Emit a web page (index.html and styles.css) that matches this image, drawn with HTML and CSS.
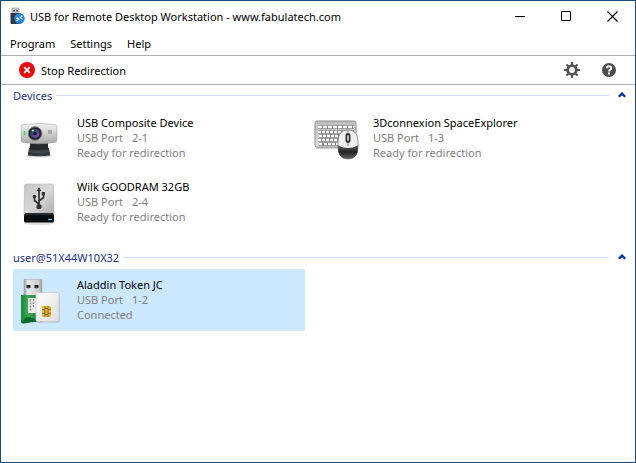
FILE: index.html
```html
<!DOCTYPE html>
<html lang="en">

<head>
	<meta charset="utf-8">
	<meta name="viewport" content="width=device-width, initial-scale=1">
	<title>USB for Remote Desktop Workstation</title>
	<link rel="stylesheet" href="styles.css">
</head>

<body>
	<div class="window">
		<header class="titlebar">
			<svg class="app-icon" width="16" height="18" viewBox="0 0 16 18">
				<rect x="3" y="1" width="7" height="6" fill="#c9cdd0" stroke="#85898c" stroke-width=".6"/>
				<path d="M4.3 3h1.5v1.5H4.3zM7.3 3h1.500v1.500H7.300z" fill="#222"/>
				<path d="M1.5 6h10v11h-9q-1 0-1-1z" fill="#34383c"/>
				<circle cx="10.5" cy="11.5" r="5.2" fill="#2188dc"/>
				<path d="M7.600 10.500l2 1.700-2 1.800M13.400 8.800l-2 1.800 2 1.700" fill="none" stroke="#fff" stroke-width="1.2"/>
			</svg>
			<h1 class="title">USB for Remote Desktop Workstation - www.fabulatech.com</h1>
			<button type="button" class="win-btn" aria-label="Minimize">
				<svg width="11" height="11" viewBox="0 0 11 11"><path d="M0 5.5h10" stroke="#000"/></svg>
			</button>
			<button type="button" class="win-btn" aria-label="Maximize">
				<svg width="11" height="11" viewBox="0 0 11 11"><path d="M.5.5h9v9h-9z" fill="none" stroke="#000"/></svg>
			</button>
			<button type="button" class="win-btn" aria-label="Close">
				<svg width="11" height="11" viewBox="0 0 11 11"><path d="M.5.5l10 10M10.5.5l-10 10" stroke="#000" stroke-width="1.1"/></svg>
			</button>
		</header>

		<nav class="menubar">
			<button type="button" class="menu">Program</button>
			<button type="button" class="menu">Settings</button>
			<button type="button" class="menu">Help</button>
		</nav>

		<div class="toolbar">
			<button type="button" class="tool stop">
				<svg width="16" height="16" viewBox="0 0 16 16">
					<circle cx="8" cy="8" r="8" fill="#e90a0e"/>
					<path d="M5.2 5.2l5.6 5.6M10.8 5.2l-5.6 5.6" stroke="#fff" stroke-width="1.9"/>
				</svg>
				Stop Redirection
			</button>
			<button type="button" class="tool" aria-label="Options">
				<svg width="16" height="16" viewBox="0 0 16 16">
					<path d="M8 0v16M0 8h16M2.500 2.500l11 11M13.500 2.500l-11 11" stroke="#555" stroke-width="2.2"/>
					<circle cx="8" cy="8" r="4.300" fill="#fff" stroke="#555" stroke-width="2.800"/>
				</svg>
			</button>
			<button type="button" class="tool" aria-label="Help">
				<svg width="14" height="14" viewBox="0 0 14 14">
					<circle cx="7" cy="7" r="7" fill="#4d4d4d"/>
					<path d="M4.700 5.300Q4.800 3.200 7 3.200t2.300 1.900Q9.300 6.200 8 6.800 7 7.300 7 8.600" fill="none" stroke="#fff" stroke-width="1.900"/>
					<path d="M6 9.600h2v1.800H6z" fill="#fff"/>
				</svg>
			</button>
		</div>

		<main class="content">
			<section class="group">
				<div class="group-head">
					<h2>Devices</h2>
					<button type="button" class="collapse" aria-label="Collapse Devices">
						<svg width="8" height="6" viewBox="0 0 8 6"><path d="M.8 4.8L4 1.6l3.2 3.2" fill="none" stroke="#003399" stroke-width="2.3"/></svg>
					</button>
				</div>
				<ul class="devices">
					<li class="device">
						<svg class="icon" width="48" height="48" viewBox="0 0 48 48">
							<defs>
								<linearGradient id="silver" x2="0" y2="1">
									<stop offset="0" stop-color="#f2f2f2"/>
									<stop offset="1" stop-color="#a9a9a9"/>
								</linearGradient>
								<linearGradient id="base" x2="0" y2="1">
									<stop offset="0" stop-color="#222"/>
									<stop offset="1" stop-color="#66696b"/>
								</linearGradient>
							</defs>
							<ellipse cx="22" cy="41" rx="13" ry="1.6" fill="#d5d5d5"/>
							<path d="M13 26h18v9H13z" fill="#282a2b"/>
							<path d="M12 33h20l1 6q-11 2-22 0z" fill="url(#base)"/>
							<path d="M11 37q11 1.600 22 0v3.400q-11 1.600-22 0z" fill="#35383a"/>
							<path d="M6 9.500q16-2 32 0 2 .3 2 2.500v13q0 2-2 2.500-16 2.500-32 0-2-.5-2-2.500V12q0-2.200 2-2.500z" fill="url(#silver)" stroke="#999" stroke-width=".5"/>
							<path d="M7.500 16v4" stroke="#35da48" stroke-width="1.600"/>
							<path d="M31 16h4M31 18h4" stroke="#777"/>
							<circle cx="18" cy="18.500" r="6.800" fill="#232428" stroke="#74767a"/>
							<circle cx="18" cy="18.500" r="4.600" fill="#315068"/>
							<circle cx="19" cy="19.500" r="3" fill="#7d43b4"/>
							<circle cx="18" cy="18.500" r="1.800" fill="#11131e"/>
							<circle cx="15.800" cy="15.500" r="1" fill="#b8d8dc"/>
						</svg>
						<div class="info">
							<h3>USB Composite Device</h3>
							<p><span>USB Port</span><span>2-1</span></p>
							<p>Ready for redirection</p>
						</div>
					</li>
					<li class="device">
						<svg class="icon" width="48" height="48" viewBox="0 0 48 48">
							<defs>
								<linearGradient id="keys" x2="0" y2="1">
									<stop offset="0" stop-color="#bcbcbc"/>
									<stop offset="1" stop-color="#e2e2e2"/>
								</linearGradient>
								<linearGradient id="mouse" x2="0" y2="1">
									<stop offset="0" stop-color="#686868"/>
									<stop offset=".5" stop-color="#222"/>
									<stop offset="1" stop-color="#626262"/>
								</linearGradient>
							</defs>
							<path d="M3 33h42" stroke="#ccc" stroke-width="2"/>
							<rect x="2" y="6" width="41" height="26" rx="1.500" fill="url(#keys)" stroke="#909090"/>
							<g stroke="#858585" stroke-width="3.800">
								<path d="M5 12h36" />
								<path d="M5 17h36M5 25h36" />
								<path d="M6 21h34M6 29h34" />
							</g>
							<g stroke="#fff" stroke-width="2.600">
								<path d="M5 12h36" stroke-dasharray="4 1"/>
								<path d="M5 17h36M5 25h36" stroke-dasharray="3 1"/>
								<path d="M6 21h34M6 29h3M11 29h15M28 29h12" stroke-dasharray="3 1"/>
							</g>
							<path d="M25 27q0-12 10-12t10 12v5q0 12-10 12T25 32z" fill="#efefef" stroke="#777" stroke-width=".7"/>
							<path d="M25 30q4 3 10 3t10-3v2q0 12-10 12T25 32z" fill="url(#mouse)"/>
							<path d="M35 15v16" stroke="#888"/>
							<rect x="32.500" y="18" width="5" height="10" rx="2.400" fill="#303030"/>
							<rect x="34" y="20" width="2" height="6" rx="1" fill="#bbb"/>
						</svg>
						<div class="info">
							<h3>3Dconnexion SpaceExplorer</h3>
							<p><span>USB Port</span><span>1-3</span></p>
							<p>Ready for redirection</p>
						</div>
					</li>
					<li class="device">
						<svg class="icon" width="48" height="48" viewBox="0 0 48 48">
							<defs>
								<linearGradient id="drive" x2="1" y2="1">
									<stop offset="0" stop-color="#c4c4c4"/>
									<stop offset=".5" stop-color="#d8d8d8"/>
									<stop offset="1" stop-color="#aaa"/>
								</linearGradient>
							</defs>
							<ellipse cx="22" cy="44" rx="15" ry="2" fill="#ddd"/>
							<path d="M9 5h26q1.500 0 1.600 1.500L37 36H7l.5-29.500Q7.500 5 9 5z" fill="url(#drive)" stroke="#bbb" stroke-width=".7"/>
							<path d="M8 34h28l1 3v5q0 1.500-1.500 1.500h-27Q7 43.500 7 42v-5z" fill="#0b0e10"/>
							<path d="M8 35h28" stroke="#4a4d4f"/>
							<path d="M31 40.500h4" stroke="#51bdf0" stroke-width="1.400"/>
							<path d="M22 27V11M22 25l-4.500-3.500v-4M22 22l4.500-3.500V16" fill="none" stroke="#333" stroke-width="1.700"/>
							<circle cx="22" cy="27.500" r="2.600" fill="#333"/>
							<circle cx="17.500" cy="17.500" r="1.800" fill="#333"/>
							<path d="M24.800 13h3.200v3.200h-3.200zM19.600 12L22 8.300l2.400 3.700z" fill="#333"/>
						</svg>
						<div class="info">
							<h3>Wilk GOODRAM 32GB</h3>
							<p><span>USB Port</span><span>2-4</span></p>
							<p>Ready for redirection</p>
						</div>
					</li>
				</ul>
			</section>

			<section class="group">
				<div class="group-head">
					<h2>user@51X44W10X32</h2>
					<button type="button" class="collapse" aria-label="Collapse user@51X44W10X32">
						<svg width="8" height="6" viewBox="0 0 8 6"><path d="M.8 4.8L4 1.6l3.2 3.2" fill="none" stroke="#003399" stroke-width="2.3"/></svg>
					</button>
				</div>
				<ul class="devices">
					<li class="device selected">
						<svg class="icon" width="48" height="48" viewBox="0 0 48 48">
							<defs>
								<linearGradient id="plug" x2="1">
									<stop offset="0" stop-color="#999"/>
									<stop offset=".2" stop-color="#e8e8e8"/>
									<stop offset=".8" stop-color="#d0d0d0"/>
									<stop offset="1" stop-color="#999"/>
								</linearGradient>
								<linearGradient id="token" x2="1">
									<stop offset="0" stop-color="#1b8739"/>
									<stop offset=".3" stop-color="#3ca952"/>
									<stop offset="1" stop-color="#117731"/>
								</linearGradient>
								<linearGradient id="card" x2="1" y2="1">
									<stop offset="0" stop-color="#fff"/>
									<stop offset="1" stop-color="#ddd"/>
								</linearGradient>
							</defs>
							<path d="M7 2.500h18V20H7z" fill="url(#plug)" stroke="#aaa" stroke-width=".6"/>
							<path d="M9.500 8h4v3h-4zM17.500 8h4v3h-4z" fill="#222"/>
							<path d="M10.500 10.500h2v1.200h-2zM18.500 10.500h2v1.200h-2z" fill="#5892c9"/>
							<path d="M4 18h22v27q-10-1-20 1.500-1.500 0-2-1z" fill="url(#token)"/>
							<path d="M4.500 45.500l5-6q8 3 16.500 2.500v3q-10-1-19 1.500z" fill="#0b682b"/>
							<path d="M11 21h9v15h-9z" fill="#eee"/>
							<path d="M13.500 22.500v12M16.500 22v9" stroke="#888" stroke-width="1.500" stroke-dasharray="2 1"/>
							<rect x="19.500" y="16.500" width="23" height="29" rx="1.500" fill="#888" opacity=".5"/>
							<rect x="19" y="15.500" width="23" height="29" rx="1.500" fill="url(#card)" stroke="#c5c5c5" stroke-width=".7"/>
							<rect x="25" y="29" width="9" height="11" rx="1" fill="#e0b43a"/>
							<path d="M25 32.500h3M25 36.500h3M31 32.500h3M31 36.500h3M28 29v2.500h3V29M28 40v-2.500h3V40M28 31.500h3v6h-3z" fill="none" stroke="#80621c" stroke-width=".8"/>
						</svg>
						<div class="info">
							<h3>Aladdin Token JC</h3>
							<p><span>USB Port</span><span>1-2</span></p>
							<p>Connected</p>
						</div>
					</li>
				</ul>
			</section>
		</main>
	</div>
</body>

</html>
```
FILE: styles.css
```css
* {
	box-sizing: border-box;
}

body {
	margin: 0;
	background: #fff;
	color: #000;
	font-family: "Noto Sans", "Open Sans", sans-serif;
	font-size: 11px;
	line-height: 15px;
}

h1, h2, h3, p, ul {
	margin: 0;
	padding: 0;
	font-size: 11px;
	font-weight: normal;
}

button {
	display: flex;
	align-items: center;
	padding: 0;
	border: 0;
	background: none;
	color: inherit;
	font: inherit;
}

svg {
	display: block;
	flex: none;
}

.window {
	min-height: 100vh;
	border: 1px solid #1b4a70;
}

.titlebar {
	display: flex;
	align-items: center;
	height: 30px;
	padding-left: 8px;
}

.title {
	flex: 1;
	padding-left: 5px;
	white-space: nowrap;
}

.win-btn {
	justify-content: center;
	width: 46px;
	height: 28px;
}

.win-btn:hover {
	background: #e5e5e5;
}

.menubar {
	display: flex;
	gap: 15px;
	height: 24px;
	padding: 0 9px;
}

.toolbar {
	display: flex;
	align-items: center;
	gap: 22px;
	height: 30px;
	padding: 0 19px 0 18px;
	border-top: 1px solid #b0b0b0;
	border-bottom: 1px solid #b0b0b0;
}

.stop {
	gap: 6px;
	margin-right: auto;
}

.group {
	padding: 0 9px 14px 12px;
}

.group-head {
	display: flex;
	align-items: center;
	height: 20px;
	margin-bottom: 2px;
	color: #1e3287;
}

.group-head h2 {
	display: flex;
	flex: 1;
	align-items: center;
	gap: 4px;
}

.group-head h2::after {
	content: "";
	flex: 1;
	height: 1px;
	background: #d2dcf2;
}

.collapse {
	padding-left: 9px;
}

.devices {
	display: grid;
	grid-template-columns: repeat(auto-fill, 292px);
	gap: 2px 4px;
	list-style: none;
}

.device {
	display: flex;
	gap: 12px;
	height: 62px;
	padding: 8px 4px;
}

.device p {
	color: #808080;
}

.device span + span {
	margin-left: 9px;
}

.selected {
	background: #cce8ff;
}
```
